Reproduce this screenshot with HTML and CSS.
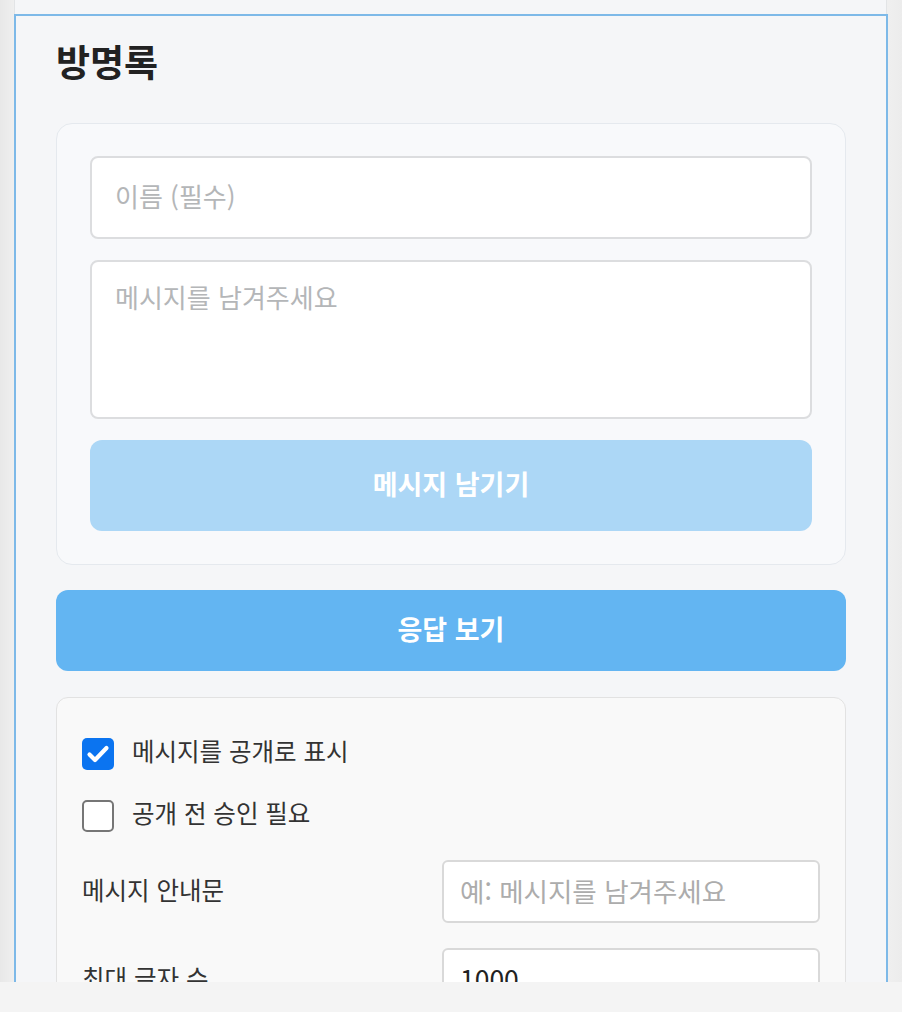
FILE: index.html
```html
<!DOCTYPE html>
<html lang="ko">
<head>
<meta charset="utf-8">
<link rel="stylesheet" href="styles.css">
<title>방명록</title>
</head>
<body>
<div class="frame">
  <div class="prev"></div>
  <section class="guestbook">
    <h2 class="title">방명록</h2>
    <div class="form-card">
      <input class="field" type="text" placeholder="이름 (필수)">
      <textarea class="field area" placeholder="메시지를 남겨주세요"></textarea>
      <button class="btn btn-submit" type="button">메시지 남기기</button>
    </div>
    <button class="btn btn-view" type="button">응답 보기</button>
    <div class="settings">
      <label class="check-row">
        <span class="box checked"><svg viewBox="0 0 32 32" width="32" height="32"><polyline points="7.5,16.5 13,22 24.5,10" fill="none" stroke="#fff" stroke-width="4.2" stroke-linecap="round" stroke-linejoin="round"/></svg></span>
        <span class="check-label">메시지를 공개로 표시</span>
      </label>
      <label class="check-row second">
        <span class="box"></span>
        <span class="check-label">공개 전 승인 필요</span>
      </label>
      <div class="set-row">
        <span class="set-label">메시지 안내문</span>
        <input class="set-input" type="text" placeholder="예: 메시지를 남겨주세요">
      </div>
      <div class="set-row">
        <span class="set-label">최대 글자 수</span>
        <input class="set-input" type="text" value="1000">
      </div>
    </div>
  </section>
</div>
</body>
</html>
```

FILE: styles.css
```css
* { box-sizing: border-box; }
html, body { margin: 0; padding: 0; }
body {
  background: #f4f4f4;
  font-family: "Noto Sans CJK KR", "Noto Sans", sans-serif;
}
.frame {
  width: 902px;
  height: 982px;
  overflow: hidden;
  background: linear-gradient(90deg, #e8e8e8 0, #efefef 14px, #efefef 888px, #ececec 902px);
  padding: 0 14px;
}
.prev {
  height: 14px;
  background: #f5f6f8;
  border-left: 1px solid #e2e4e6;
  border-right: 1px solid #e2e4e6;
  margin: 0 1px 0 0;
}
.guestbook {
  border: 2px solid #7db9e8;
  background: #f5f6f8;
  padding: 22px 40px 40px;
}
.title {
  margin: 0 0 39px;
  font-size: 37px;
  line-height: 46px;
  font-weight: 700;
  color: #222;
}
.form-card {
  background: #f8f9fb;
  border: 1px solid #e5e9ee;
  border-radius: 16px;
  padding: 32px 33px 33px;
  display: flex;
  flex-direction: column;
  gap: 21px;
}
.field {
  width: 100%;
  height: 83px;
  border: 2px solid #dcdddf;
  border-radius: 8px;
  background: #fff;
  padding: 0 0 4px 23px;
  font-family: inherit;
  font-size: 26px;
  color: #222;
  outline: none;
}
.area {
  height: 159px;
  padding: 16px 23px;
  line-height: 38px;
  resize: none;
  display: block;
}
.field::placeholder { color: #b4b6b8; }
.btn {
  display: block;
  width: 100%;
  border: none;
  border-radius: 12px;
  color: #fff;
  font-family: inherit;
  font-weight: 700;
  font-size: 27px;
  padding: 0 0 4px;
  cursor: pointer;
}
.btn-submit {
  height: 91px;
  background: #acd7f6;
}
.btn-view {
  height: 81px;
  margin-top: 25px;
  background: #63b5f2;
}
.settings {
  margin-top: 26px;
  background: #f9f9f9;
  border: 1px solid #e2e2e2;
  border-radius: 12px;
  padding: 40px 25px 25px;
}
.check-row {
  display: flex;
  align-items: center;
  gap: 18px;
  height: 32px;
  margin-bottom: 30px;
}
.check-row.second { margin-bottom: 28px; }
.box {
  width: 32px;
  height: 32px;
  flex: none;
  border: 2px solid #767676;
  border-radius: 5px;
  background: #fff;
  display: flex;
}
.box.checked {
  border: none;
  background: #0b74f0;
}
.check-label {
  font-size: 24.5px;
  line-height: 32px;
  padding-bottom: 6px;
  color: #333;
}
.set-row {
  display: grid;
  grid-template-columns: 1fr 378px;
  align-items: center;
  margin-bottom: 25px;
}
.set-label {
  font-size: 24.5px;
  padding-bottom: 4px;
  color: #333;
}
.set-input {
  width: 100%;
  height: 63px;
  border: 2px solid #d9d9d9;
  border-radius: 6px;
  background: #fff;
  padding: 0 0 3px 16px;
  font-family: inherit;
  font-size: 26.5px;
  color: #222;
  outline: none;
}
.set-input::placeholder { color: #acacac; }
```
